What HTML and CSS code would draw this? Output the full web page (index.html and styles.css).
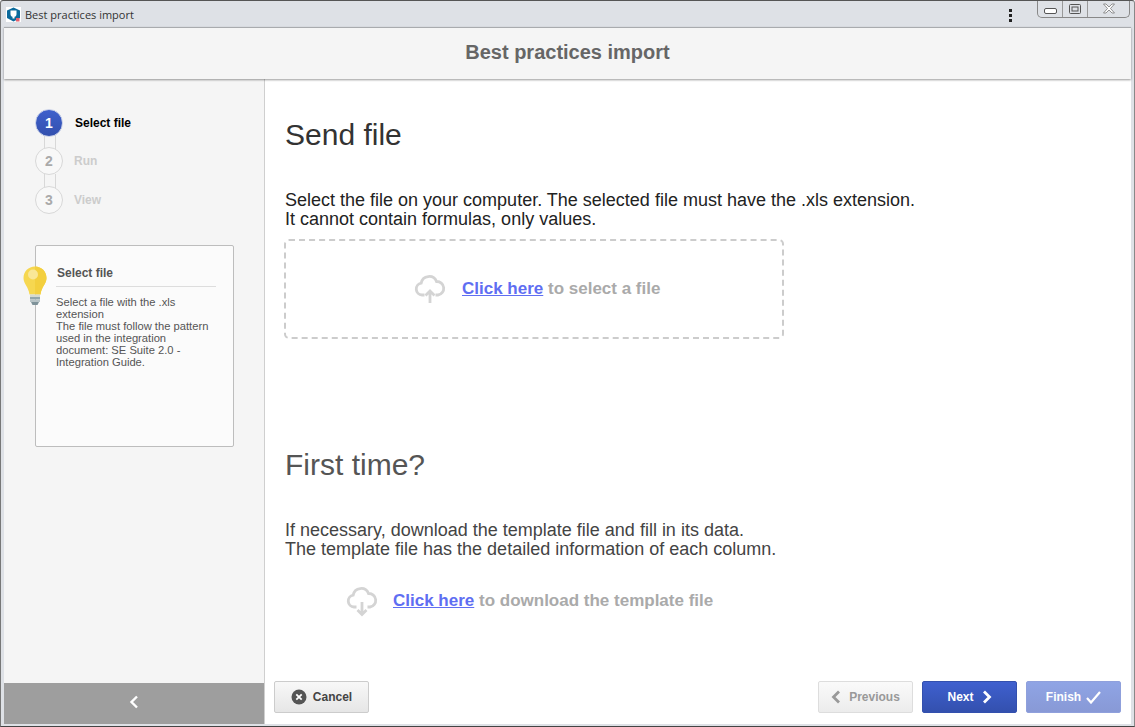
FILE: index.html
```html
<!DOCTYPE html>
<html lang="en">
<head>
<meta charset="utf-8">
<title>Best practices import</title>
<link rel="stylesheet" href="styles.css">
</head>
<body>
<div class="window">
  <div class="titlebar">
    <svg class="app-icon" width="15" height="15" viewBox="0 0 15 15"><rect width="15" height="15" fill="#fff"/><path d="M7.5 .5 14 3.500V11L7.500 14.500 1 11V3.500Z" fill="#0b6a9c"/><path d="M4.500 3.500h6v3.500a3 3 0 0 1-6 0Z" fill="#fff"/><rect x="6.500" y="9.500" width="2" height="2" fill="#fff"/><rect x="10" y="11" width="3.500" height="3.500" fill="#e4606d"/></svg>
    <span class="title-text">Best practices import</span>
    <span class="kebab"><i></i><i></i><i></i></span>
    <div class="win-controls">
      <span class="win-btn min"><svg width="13" height="6" viewBox="0 0 13 6"><rect x=".5" y=".5" width="12" height="5" rx="1.5" fill="#fff" stroke="#555"/></svg></span>
      <span class="win-btn max"><svg width="12" height="10" viewBox="0 0 12 10"><rect x=".5" y=".5" width="11" height="9" rx="1" fill="none" stroke="#555"/><rect x="3" y="3" width="6" height="4" fill="none" stroke="#555"/></svg></span>
      <span class="win-btn close"><svg width="14" height="11" viewBox="0 0 14 11"><path d="M1.5 1h2.5L7 4l3-3h2.500L8.500 5.500l4 4.500H10L7 7l-3 3H1.500l4-4.500Z" fill="#fff" stroke="#777" stroke-width=".8"/></svg></span>
    </div>
  </div>
  <header class="header">Best practices import</header>
  <div class="body">
    <aside class="sidebar">
      <div class="side-main">
        <ol class="steps">
          <li class="step active"><span class="circle">1</span><span class="step-label">Select file</span></li>
          <li class="step"><span class="circle">2</span><span class="step-label">Run</span></li>
          <li class="step"><span class="circle">3</span><span class="step-label">View</span></li>
        </ol>
        <div class="tip">
          <svg class="bulb" width="26" height="40" viewBox="0 0 26 40">
            <path d="M13 .5C6.400 .5 1.500 5.500 1.500 12c0 6 5 8.500 6 16.500h11c1-8 6-10.500 6-16.500C24.500 5.500 19.600 .5 13 .5Z" fill="#f6d750"/>
            <path d="M13 .5c6.600 0 11.500 5 11.500 11.500 0 6-5 8.500-6 16.500H13Z" fill="#f3cf3e"/>
            <circle cx="11" cy="8.500" r="5" fill="#f9e797"/>
            <rect x="8" y="28.500" width="10" height="2.500" fill="#d5d9cf"/>
            <rect x="8" y="31" width="10" height="2.500" fill="#93a6ab"/>
            <rect x="8" y="33.500" width="10" height="2.500" fill="#b7c3c6"/>
            <path d="M9 36h8l-1.500 3h-5Z" fill="#7e9299"/>
          </svg>
          <h3 class="tip-title">Select file</h3>
          <p class="tip-text">Select a file with the .xls extension<br>The file must follow the pattern used in the integration document: SE Suite 2.0 - Integration Guide.</p>
        </div>
      </div>
      <div class="collapse"><svg width="10" height="14" viewBox="0 0 10 14"><path d="M8 1.500 2.500 7 8 12.500" fill="none" stroke="#fff" stroke-width="2.400"/></svg></div>
    </aside>
    <main class="main">
      <div class="content">
        <h1 class="heading dark">Send file</h1>
        <p class="lead dark">Select the file on your computer. The selected file must have the .xls extension.<br>It cannot contain formulas, only values.</p>
        <div class="dropzone">
          <svg class="cloud" width="32" height="32" viewBox="0 0 32 32"><path d="M10.500 22H8a6 6 0 0 1-.8-11.900A8 8 0 0 1 22.500 8.500 6.800 6.800 0 0 1 24 22h-2.500" fill="none" stroke="#d4d4d4" stroke-width="2.800"/><path d="M16 30V18M11.500 22.500l4.500-4.500 4.500 4.500" fill="none" stroke="#d4d4d4" stroke-width="2.800"/></svg>
          <span class="action"><a class="link" href="#">Click here</a> to select a file</span>
        </div>
        <h1 class="heading grey second">First time?</h1>
        <p class="lead grey">If necessary, download the template file and fill in its data.<br>The template file has the detailed information of each column.</p>
        <div class="download">
          <svg class="cloud" width="32" height="32" viewBox="0 0 32 32"><path d="M10.500 22H8a6 6 0 0 1-.8-11.900A8 8 0 0 1 22.500 8.500 6.800 6.800 0 0 1 24 22h-2.500" fill="none" stroke="#d4d4d4" stroke-width="2.800"/><path d="M16 17v12.500M11.500 25l4.500 4.500 4.500-4.500" fill="none" stroke="#d4d4d4" stroke-width="2.800"/></svg>
          <span class="action"><a class="link" href="#">Click here</a> to download the template file</span>
        </div>
      </div>
      <footer class="footer">
        <button class="btn btn-cancel"><svg width="16" height="16" viewBox="0 0 16 16"><circle cx="8" cy="8" r="7.500" fill="#555"/><path d="M5.300 5.300l5.400 5.400M10.700 5.300l-5.400 5.400" stroke="#fff" stroke-width="1.800"/></svg>Cancel</button>
        <span class="spacer"></span>
        <button class="btn btn-prev"><svg width="10" height="14" viewBox="0 0 10 14"><path d="M8 1.500 2.500 7 8 12.500" fill="none" stroke="#999" stroke-width="2.800"/></svg>Previous</button>
        <button class="btn btn-next">Next<svg width="10" height="14" viewBox="0 0 10 14"><path d="M2 1.500 7.500 7 2 12.500" fill="none" stroke="#fff" stroke-width="2.800"/></svg></button>
        <button class="btn btn-finish">Finish<svg width="15" height="13" viewBox="0 0 15 13"><path d="M1 7l4 4.500L14 1" fill="none" stroke="#fff" stroke-width="2.200"/></svg></button>
      </footer>
    </main>
  </div>
</div>
</body>
</html>
```
FILE: styles.css
```css
* { box-sizing: border-box; }
html, body { margin: 0; height: 100%; }
body { font-family: "Liberation Sans", Arial, sans-serif; background: #fff; overflow: hidden; }
.window {
  width: 1135px; height: 727px; display: flex; flex-direction: column;
  background: #dee1e6; border: 1px solid #555; border-left-color: #777;
  border-bottom-color: #444; border-right-color: #888; padding: 0 3px 2px 3px;
  border-top-left-radius: 3px; border-top-right-radius: 3px;
}
.titlebar { height: 26px; flex: none; display: flex; align-items: center; padding-left: 2px; margin: 0 -3px 0 0; }
.app-icon { flex: none; }
.title-text { font-size: 11px; color: #333; margin-left: 4px; font-family: "Open Sans", "Liberation Sans", sans-serif; }
.kebab { margin-left: auto; display: flex; flex-direction: column; gap: 2px; margin-right: 25px; margin-top: 2px; }
.kebab i { width: 3px; height: 3px; background: #222; display: block; }
.win-controls { display: flex; align-self: flex-start; height: 17px; border: 1px solid #888; border-top: 0; border-radius: 0 0 5px 5px; margin-right: 4px; }
.win-btn { display: flex; align-items: center; justify-content: center; height: 100%; }
.win-btn.min { width: 25px; border-right: 1px solid #999; padding-top: 4px; }
.win-btn.max { width: 25px; border-right: 1px solid #999; padding-bottom: 1px; }
.win-btn.close { width: 41px; padding-bottom: 2px; }
.header {
  height: 52px; flex: none; background: #f5f5f5; border-top: 1px solid #a9abae;
  display: flex; align-items: center; justify-content: center;
  font-size: 20px; font-weight: bold; color: #666; position: relative;
  box-shadow: 0 1px 2px rgba(0,0,0,.4); z-index: 1; padding-bottom: 2px;
}
.body { flex: 1; display: flex; min-height: 0; background: #fff; }
.sidebar { width: 261px; flex: none; display: flex; flex-direction: column; background: #f5f5f5; border-right: 1px solid #cfcfcf; }
.side-main { flex: 1; padding: 30px 0 0 31px; }
.steps { list-style: none; margin: 0; padding: 0; }
.step { display: flex; align-items: center; height: 28px; margin-bottom: 10px; position: relative; }
.step:nth-child(2) { margin-bottom: 11px; }
.step:last-child { margin-bottom: 0; }
.step + .step::before {
  content: ""; position: absolute; left: 9px; top: -12px; width: 10px; height: 14px;
  background: #f5f5f5; border-left: 1px solid #d8d8d8; border-right: 1px solid #d8d8d8;
}
.circle {
  width: 28px; height: 28px; border-radius: 50%; border: 1px solid #d8d8d8; background: #f8f8f8;
  display: flex; align-items: center; justify-content: center; flex: none;
  font-size: 14px; font-weight: bold; color: #aaa; position: relative; z-index: 1;
}
.step-label { font-size: 12px; font-weight: bold; color: #ccc; margin-left: 11px; }
.step.active .circle { background: linear-gradient(#3e60cc, #3350ae); border-color: #c8d0e8; color: #fff; }
.step.active .step-label { color: #000; margin-left: 12px; }
.tip {
  width: 199px; height: 202px; margin-top: 31px; background: #fbfbfb; border: 1px solid #bdbdbd;
  border-radius: 2px; padding: 20px 17px 0 20px; position: relative;
}
.bulb { position: absolute; left: -14px; top: 20px; }
.tip-title { margin: 0; font-size: 12px; font-weight: bold; color: #555; padding-bottom: 6px; border-bottom: 1px solid #ddd; line-height: 14px; text-indent: 1px; }
.tip-text { margin: 9px 0 0; font-size: 11.200px; line-height: 12px; color: #555; }
.collapse { height: 41px; flex: none; background: #9e9e9e; display: flex; align-items: center; justify-content: center; padding-bottom: 3px; }
.main { flex: 1; min-width: 0; display: flex; flex-direction: column; background: #fff; }
.content { flex: 1; padding: 0 0 0 20px; min-height: 0; }
.heading { margin: 0; font-size: 30px; font-weight: normal; line-height: 36px; }
.heading.dark { color: #333; margin-top: 38px; }
.heading.grey { color: #555; }
.second { margin-top: 108px; }
.lead { margin: 38px 0 0; font-size: 18px; line-height: 19px; }
.lead.dark { color: #222; }
.lead.grey { color: #444; }
.dropzone {
  width: 500px; height: 100px; margin: 10px 0 0 -1px; border: 2px dashed #ccc; border-radius: 5px;
  display: flex; align-items: center; padding-left: 128px; gap: 16px;
}
.download { display: flex; align-items: center; margin-top: 26px; padding-left: 61px; gap: 15px; height: 32px; }
.cloud { flex: none; }
.action { font-size: 17px; font-weight: bold; color: #aaa; }
.link { color: #5f6ef2; text-decoration: underline; }
.footer { height: 43px; flex: none; display: flex; align-items: flex-start; gap: 9px; padding: 0 10px 0 9px; }
.spacer { flex: 1; }
.btn {
  width: 95px; height: 32px; font: bold 12px "Liberation Sans", Arial, sans-serif; border-radius: 2px;
  display: flex; align-items: center; justify-content: center; gap: 6px; padding: 0; border: 1px solid #ccc;
}
.btn-cancel { background: linear-gradient(#f8f8f8, #e6e6e6); color: #444; }
.btn-prev { background: linear-gradient(#fafafa, #ececec); color: #999; border-color: #ddd; gap: 8px; }
.btn-next { background: linear-gradient(#3f60cf, #3350ae); color: #fff; border-color: #3350ae; gap: 8px; }
.btn-finish { background: linear-gradient(#8fa4e5, #8899d6); color: #fff; border-color: #8fa0dc; gap: 5px; }
```
